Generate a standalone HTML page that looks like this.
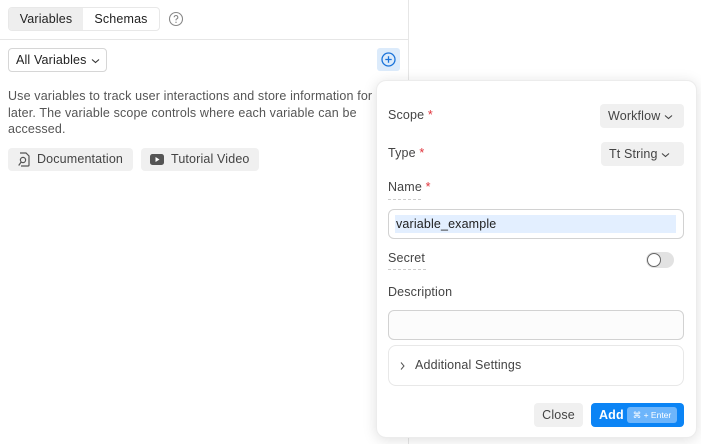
<!DOCTYPE html>
<html><head><meta charset="utf-8"><style>
*{box-sizing:border-box;margin:0;padding:0}
body{width:701px;height:444px;background:#fff;font-family:"Liberation Sans",sans-serif;font-size:13px;color:#333;position:relative;overflow:hidden;letter-spacing:0.15px}
.abs{position:absolute;white-space:nowrap}
.left{left:0;top:0;width:409px;height:444px;border-right:1px solid #e6e6e6}
.tabs{left:8px;top:7px;width:152px;height:24px;border:1px solid #e8e8e8;border-radius:4px;background:#fff;display:flex}
.tab{height:22px;line-height:22px;font-size:12.5px;color:#222;text-align:center}
.hr{left:0;top:39px;width:409px;height:1px;background:#e6e6e6}
.sel{left:8px;top:48px;width:99px;height:24px;border:1px solid #d6d6d6;border-radius:4px;line-height:22px;padding-left:7px;font-size:12.5px;color:#222}
.desc{left:8px;top:88px;font-size:12.5px;line-height:16.5px;color:#555}
.btn{height:23px;background:#f0f0f0;border-radius:4px;line-height:23px;font-size:12.5px;color:#444}
.pop{left:376px;top:80px;width:321px;height:358px;background:#fff;border-radius:10px;box-shadow:0 2px 14px rgba(0,0,0,.13);border:1px solid #ececec}
.lbl{font-size:12.5px;color:#444}
.req{color:#e0333b}
.dd{background:#f0f0f0;border-radius:4px;height:24px;line-height:24px;font-size:12.5px;color:#444;padding-left:8px}
.inp{border:1px solid #d2d2d2;border-radius:6px;background:#fff}
.dash{border-bottom:1px dashed #ccc}
</style></head><body>
<div class="abs left"></div>
<div class="abs tabs">
 <div class="tab" style="width:74px;background:#eeeeee;border-radius:3px 0 0 3px">Variables</div>
 <div class="tab" style="width:76px">Schemas</div>
</div>
<svg class="abs" style="left:168px;top:11px" width="16" height="16" viewBox="0 0 16 16"><circle cx="8" cy="8" r="6.5" fill="none" stroke="#888" stroke-width="1.1"/><path d="M6.2 6.3a1.8 1.8 0 1 1 2.4 1.7c-.5.2-.6.5-.6 1v.4" fill="none" stroke="#888" stroke-width="1.1"/><circle cx="8" cy="11.3" r=".7" fill="#888"/></svg>
<div class="abs hr"></div>
<div class="abs sel">All Variables <svg width="9" height="6" viewBox="0 0 9 6" style="margin-left:1px"><path d="M1 1.5l3.5 3 3.5-3" fill="none" stroke="#333" stroke-width="1.1"/></svg></div>
<div class="abs" style="left:377px;top:48px;width:23px;height:23px;background:#dcebfb;border-radius:3px"></div>
<svg class="abs" style="left:380px;top:51px" width="17" height="17" viewBox="0 0 17 17"><circle cx="8.5" cy="8.5" r="6.5" fill="none" stroke="#1a73d9" stroke-width="1.3"/><path d="M8.5 5.3v6.4M5.3 8.5h6.4" stroke="#1a73d9" stroke-width="1.3"/></svg>
<div class="abs desc">Use variables to track user interactions and store information for<br>later. The variable scope controls where each variable can be<br>accessed.</div>
<div class="abs btn" style="left:8px;top:148px;width:125px;padding-left:29px">Documentation</div>
<svg class="abs" style="left:16px;top:151px" width="16" height="17" viewBox="0 0 16 17"><path d="M4 2h6l3 3v9a1 1 0 0 1-1 1H5" fill="none" stroke="#555" stroke-width="1.2"/><circle cx="7" cy="9" r="2.6" fill="none" stroke="#555" stroke-width="1.2"/><path d="M5.2 11l-2.5 3.5" stroke="#555" stroke-width="1.2"/></svg>
<div class="abs btn" style="left:141px;top:148px;width:118px;padding-left:30px">Tutorial Video</div>
<svg class="abs" style="left:149px;top:153px" width="16" height="13" viewBox="0 0 16 13"><rect x="1" y="1" width="14" height="11" rx="2.5" fill="#555"/><path d="M6.5 4v5l4-2.5z" fill="#fff"/></svg>

<div class="abs pop"></div>
<div class="abs lbl" style="left:388px;top:108px">Scope <span class="req">*</span></div>
<div class="abs dd" style="left:600px;top:104px;width:84px">Workflow <svg width="9" height="6" viewBox="0 0 9 6"><path d="M1 1.5l3.5 3 3.5-3" fill="none" stroke="#444" stroke-width="1.1"/></svg></div>
<div class="abs lbl" style="left:388px;top:146px">Type <span class="req">*</span></div>
<div class="abs dd" style="left:601px;top:142px;width:83px">Tt String <svg width="9" height="6" viewBox="0 0 9 6"><path d="M1 1.5l3.5 3 3.5-3" fill="none" stroke="#444" stroke-width="1.1"/></svg></div>
<div class="abs lbl" style="left:388px;top:180px">Name <span class="req">*</span></div>
<div class="abs dash" style="left:388px;top:199px;width:33px;height:1px"></div>
<div class="abs inp" style="left:388px;top:209px;width:296px;height:30px"></div>
<div class="abs" style="left:395px;top:215px;width:281px;height:18px;background:#e3efff;font-size:12.5px;line-height:18px;color:#222;padding-left:1px">variable_example</div>
<div class="abs lbl dash" style="left:388px;top:251px;padding-bottom:4px;width:38px">Secret</div>
<div class="abs" style="left:646px;top:252px;width:28px;height:16px;border-radius:8px;background:#e2e2e2"></div>
<div class="abs" style="left:647px;top:253px;width:14px;height:14px;border-radius:50%;background:#fff;border:1px solid #666"></div>
<div class="abs lbl" style="left:388px;top:285px">Description</div>
<div class="abs inp" style="left:388px;top:310px;width:296px;height:30px;background:#fcfcfc"></div>
<div class="abs" style="left:388px;top:345px;width:296px;height:41px;border:1px solid #e8e8e8;border-radius:8px"></div>
<svg class="abs" style="left:399px;top:361px" width="7" height="10" viewBox="0 0 7 10"><path d="M2 1.5l3 3.5-3 3.5" fill="none" stroke="#555" stroke-width="1"/></svg>
<div class="abs" style="left:415px;top:358px;font-size:12.5px;color:#444">Additional Settings</div>
<div class="abs" style="left:534px;top:403px;width:49px;height:24px;background:#f0f0f0;border-radius:4px;text-align:center;line-height:24px;font-size:12.5px;color:#444">Close</div>
<div class="abs" style="left:591px;top:403px;width:93px;height:24px;background:#0b84f5;border-radius:4px"></div>
<div class="abs" style="left:599px;top:403px;line-height:24px;font-size:12.5px;font-weight:bold;color:#fff">Add</div>
<div class="abs" style="left:627px;top:407px;width:50px;height:16px;background:#6db5fb;border-radius:3px;color:#fff;font-size:8.5px;line-height:16px;text-align:center;letter-spacing:0">⌘ + Enter</div>
</body></html>
